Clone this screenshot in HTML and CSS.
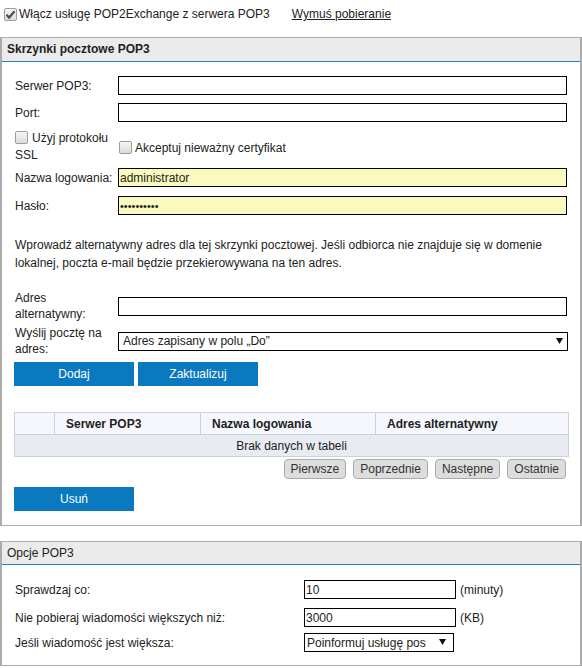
FILE: index.html
```html
<!DOCTYPE html>
<html lang="pl">
<head>
<meta charset="utf-8">
<title>POP2Exchange</title>
<link rel="stylesheet" href="styles.css">
</head>
<body>
<div class="top">
  <label class="top-check"><span class="cb"><svg width="11" height="11" viewBox="0 0 11 11"><path d="M1.5 5.8l2.6 2.7L9.6 2.2" fill="none" stroke="#4d4d4d" stroke-width="2.2"/></svg></span>Włącz usługę POP2Exchange z serwera POP3</label>
  <a class="link" href="#">Wymuś pobieranie</a>
</div>

<section class="panel">
  <div class="panel-head strong">Skrzynki pocztowe POP3</div>
  <div class="panel-body">
    <div class="row"><label class="lbl">Serwer POP3:</label><input class="inp wide" type="text"></div>
    <div class="row g8"><label class="lbl">Port:</label><input class="inp wide" type="text"></div>
    <div class="row row-checks g8">
      <label class="lbl lbl-check"><span class="cb"></span>Użyj protokołu SSL</label>
      <label class="inline-check"><span class="cb"></span>Akceptuj nieważny certyfikat</label>
    </div>
    <div class="row g4"><label class="lbl">Nazwa logowania:</label><input class="inp wide filled" type="text" value="administrator"></div>
    <div class="row g9"><label class="lbl">Hasło:</label><input class="inp wide filled" type="password" value="1234567890"></div>
    <p class="info">Wprowadź alternatywny adres dla tej skrzynki pocztowej. Jeśli odbiorca nie znajduje się w domenie lokalnej, poczta e-mail będzie przekierowywana na ten adres.</p>
    <div class="row tall g18"><label class="lbl">Adres alternatywny:</label><input class="inp wide" type="text"></div>
    <div class="row tall g3"><label class="lbl">Wyślij pocztę na adres:</label>
      <div class="sel sel-wide"><select class="select"><option>Adres zapisany w polu „Do”</option></select><svg class="arrow" width="7" height="6" viewBox="0 0 7 6"><path d="M0 0h7L3.5 6z" fill="#111"/></svg></div>
    </div>
    <div class="btns">
      <button class="btn">Dodaj</button>
      <button class="btn">Zaktualizuj</button>
    </div>
    <table class="grid">
      <thead>
        <tr><th class="c1"></th><th class="c2">Serwer POP3</th><th class="c3">Nazwa logowania</th><th class="c4">Adres alternatywny</th></tr>
      </thead>
      <tbody>
        <tr><td colspan="4" class="empty">Brak danych w tabeli</td></tr>
      </tbody>
    </table>
    <div class="pager">
      <button class="pbtn">Pierwsze</button>
      <button class="pbtn">Poprzednie</button>
      <button class="pbtn">Następne</button>
      <button class="pbtn">Ostatnie</button>
    </div>
    <button class="btn del">Usuń</button>
  </div>
</section>

<section class="panel panel2">
  <div class="panel-head">Opcje POP3</div>
  <div class="panel-body body2">
    <div class="orow"><label class="lbl">Sprawdzaj co:</label><input class="inp small" type="text" value="10"><span class="unit">(minuty)</span></div>
    <div class="orow g9"><label class="lbl">Nie pobieraj wiadomości większych niż:</label><input class="inp small" type="text" value="3000"><span class="unit">(KB)</span></div>
    <div class="orow g6"><label class="lbl">Jeśli wiadomość jest większa:</label>
      <div class="sel sel-small"><select class="select select-small"><option>Poinformuj usługę pos</option></select><svg class="arrow arrow-small" width="7" height="6" viewBox="0 0 7 6"><path d="M0 0h7L3.5 6z" fill="#111"/></svg></div>
    </div>
  </div>
</section>
</body>
</html>
```

FILE: styles.css
```css
* { box-sizing: border-box; }

body {
  margin: 0;
  width: 582px;
  font-family: "Liberation Sans", Arial, sans-serif;
  font-size: 12px;
  color: #222;
  background: #fff;
}

/* top bar */
.top {
  height: 27px;
  display: flex;
  align-items: center;
  padding-left: 4px;
  padding-top: 1px;
}
.top-check {
  display: flex;
  align-items: center;
}
.top-check .cb { margin-right: 2px; }
.link {
  margin-left: 22px;
  color: #222;
  text-decoration: underline;
}

/* checkbox */
.cb {
  display: inline-flex;
  align-items: center;
  justify-content: center;
  width: 13px;
  height: 13px;
  border: 1px solid #9c9c9c;
  border-radius: 2px;
  background: linear-gradient(#f6f6f6, #dcdcdc);
  vertical-align: -2px;
  flex: none;
}

/* panels */
.panel {
  margin-top: 10px;
  border: 1px solid #ababab;
  border-left-width: 2px;
  border-right-width: 2px;
}
.panel2 { margin-top: 15px; }
.panel-head {
  height: 24px;
  line-height: 23px;
  padding-left: 5px;
  background: #ebebeb;
  border-bottom: 1px solid #1a7fd0;
}
.panel2 .panel-head { height: 23px; line-height: 22px; }
.strong { font-weight: bold; }
.panel-body {
  padding: 14px 12px 14px 12px;
}

/* rows */
.row {
  display: grid;
  grid-template-columns: 104px 1fr;
  align-items: center;
  min-height: 19px;
}
.lbl { padding-left: 1px; }
.g3 { margin-top: 3px; }
.g4 { margin-top: 4px; }
.g6 { margin-top: 6px; }
.g8 { margin-top: 8px; }
.g9 { margin-top: 9px; }
.g18 { margin-top: 18px; }

.tall { height: 32px; }
.tall .lbl { line-height: 16px; padding-right: 4px; }

.row-checks { height: 34px; }
.lbl-check {
  line-height: 17px;
  padding-right: 8px;
  align-self: start;
}
.lbl-check .cb { margin-right: 4px; }
.inline-check {
  display: flex;
  align-items: center;
  padding-left: 1px;
  padding-top: 1px;
}
.inline-check .cb { margin-right: 3px; }

.inp {
  height: 19px;
  border: 1px solid #000;
  padding: 0 1px;
  font: inherit;
  color: #222;
  background: #fff;
  outline: none;
}
.wide { width: 449px; }
.filled { background: #fafabe; }
input[type="password"] { letter-spacing: 0; font-size: 11px; }

.info {
  margin: 21px 0 0 1px;
  line-height: 18px;
}

/* selects */
.sel {
  position: relative;
  height: 19px;
}
.sel-wide { width: 450px; }
.select {
  -webkit-appearance: none;
  appearance: none;
  width: 100%;
  height: 19px;
  border: 1px solid #000;
  border-radius: 0;
  background: #fff;
  font: inherit;
  color: #222;
  padding: 0 20px 0 4px;
  outline: none;
}
.arrow {
  position: absolute;
  right: 5px;
  top: 6px;
  pointer-events: none;
}
.sel-small { width: 150px; }
.select-small { padding: 0 20px 0 2px; }
.arrow-small { right: 8px; }

/* buttons */
.btns {
  display: flex;
  gap: 4px;
  margin-top: 5px;
}
.btn {
  width: 120px;
  height: 24px;
  border: 0;
  background: #0a79c0;
  color: #fff;
  font: inherit;
  padding: 0;
}
.del { margin-top: 8px; display: block; }

/* table */
.grid {
  width: 555px;
  margin-top: 26px;
  border-collapse: collapse;
  border: 1px solid #c8d2e2;
}
.grid th {
  height: 22px;
  background: #f5f7fd;
  border: 1px solid #c8d2e2;
  text-align: left;
  padding: 0 0 0 11px;
  font-weight: bold;
}
.grid .c1 { width: 40px; }
.grid .c2 { width: 146px; }
.grid .c3 { width: 175px; }
.grid td {
  height: 22px;
  background: #e8ebf1;
  border: 1px solid #c8d2e2;
  padding: 0;
}
.empty { text-align: center; }

/* pager */
.pager {
  display: flex;
  justify-content: flex-end;
  gap: 7px;
  margin-top: 2px;
  width: 552px;
}
.pbtn {
  height: 20px;
  padding: 0 6px;
  border: 1px solid #a9a9a9;
  border-radius: 4px;
  background: #dddddd;
  color: #333;
  font: inherit;
}

/* options panel */
.body2 { padding-top: 15px; padding-bottom: 13px; }
.orow {
  display: grid;
  grid-template-columns: 290px auto 1fr;
  align-items: center;
  min-height: 19px;
}
.small { width: 152px; }
.unit { padding-left: 4px; }
```
